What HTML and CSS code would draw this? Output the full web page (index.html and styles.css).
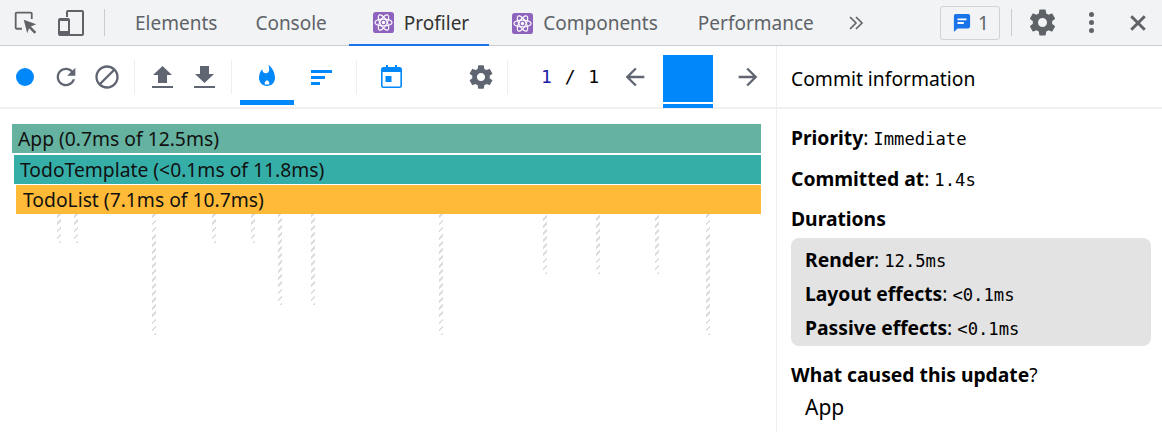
FILE: index.html
```html
<!DOCTYPE html>
<html lang="en">

    <head>
        <meta charset="UTF-8">
        <meta name="viewport" content="width=device-width, initial-scale=1.0">
        <title>Profiler</title>

        <link rel="stylesheet" href="styles.css">

    </head>

    <body>
        <div class="devtools">
            <div class="tabbar">
                <svg class="tab-icon inspect" viewBox="0 0 28 28"><path d="M10 22H4a2 2 0 0 1-2-2V4a2 2 0 0 1 2-2h16a2 2 0 0 1 2 2v6h-2V4H4v16h6z"/><path d="M12 11l14 5-6 2.5 6 6-2 2-6-6L16 26z"/></svg>
                <svg class="tab-icon device" viewBox="0 0 28 28"><path d="M9 1h16a2 2 0 0 1 2 2v22a2 2 0 0 1-2 2H12v-2h13V3H11v5H9V3a2 2 0 0 1 2-2z"/><path fill-rule="evenodd" d="M3 9h8a2 2 0 0 1 2 2v14a2 2 0 0 1-2 2H3a2 2 0 0 1-2-2V11a2 2 0 0 1 2-2zm0 3v10h8V12z"/></svg>
                <div class="tab-sep"></div>
                <div class="tab tab-elements">Elements</div>
                <div class="tab tab-console">Console</div>
                <div class="tab tab-profiler active">
                    <svg class="react-badge" viewBox="0 0 22 22"><rect width="22" height="22" rx="3" fill="#8e63bd"/><g fill="none" stroke="#fff" stroke-width="1.2"><ellipse cx="11" cy="11" rx="9" ry="3.6"/><ellipse cx="11" cy="11" rx="9" ry="3.6" transform="rotate(60 11 11)"/><ellipse cx="11" cy="11" rx="9" ry="3.6" transform="rotate(120 11 11)"/></g><circle cx="11" cy="11" r="1.8" fill="#fff"/></svg>
                    Profiler
                </div>
                <div class="tab tab-components">
                    <svg class="react-badge" viewBox="0 0 22 22"><rect width="22" height="22" rx="3" fill="#8e63bd"/><g fill="none" stroke="#fff" stroke-width="1.2"><ellipse cx="11" cy="11" rx="9" ry="3.6"/><ellipse cx="11" cy="11" rx="9" ry="3.6" transform="rotate(60 11 11)"/><ellipse cx="11" cy="11" rx="9" ry="3.6" transform="rotate(120 11 11)"/></g><circle cx="11" cy="11" r="1.8" fill="#fff"/></svg>
                    Components
                </div>
                <div class="tab tab-performance">Performance</div>
                <svg class="more" viewBox="0 0 16 14"><path d="M2 1l6 6-6 6M8 1l6 6-6 6"/></svg>
                <div class="issues">
                    <svg viewBox="0 0 20 22"><path fill="#1a73e8" d="M3 1h14a2 2 0 0 1 2 2v12a2 2 0 0 1-2 2H5l-4 4V3a2 2 0 0 1 2-2z"/><path fill="#fff" d="M5 6h10v2H5zM5 10h7v2H5z"/></svg>
                    <span>1</span>
                </div>
                <div class="tab-sep sep-right"></div>
                <svg class="top-gear" viewBox="0 0 24 24"><path d="M19.43 12.98c.04-.32.07-.64.07-.98s-.03-.66-.07-.98l2.11-1.65c.19-.15.24-.42.12-.64l-2-3.46c-.12-.22-.39-.3-.61-.22l-2.49 1c-.52-.4-1.08-.73-1.69-.98l-.38-2.65C14.46 2.18 14.25 2 14 2h-4c-.25 0-.46.18-.49.42l-.38 2.65c-.61.25-1.17.59-1.69.98l-2.49-1c-.23-.09-.49 0-.61.22l-2 3.46c-.13.22-.07.49.12.64l2.11 1.65c-.04.32-.07.65-.07.98s.03.66.07.98l-2.11 1.65c-.19.15-.24.42-.12.64l2 3.46c.12.22.39.3.61.22l2.49-1c.52.4 1.08.73 1.69.98l.38 2.65c.03.24.24.42.49.42h4c.25 0 .46-.18.49-.42l.38-2.65c.61-.25 1.17-.59 1.69-.98l2.49 1c.23.09.49 0 .61-.22l2-3.46c.12-.22.07-.49-.12-.64l-2.11-1.65zM12 15.5c-1.93 0-3.5-1.57-3.5-3.5s1.57-3.5 3.5-3.5 3.5 1.57 3.5 3.5-1.57 3.5-3.5 3.5z"/></svg>
                <div class="kebab"><i></i><i></i><i></i></div>
                <svg class="close" viewBox="0 0 16 16"><path d="M2 2l12 12M14 2L2 14"/></svg>
            </div>

            <div class="panel">
                <div class="main">
                    <div class="toolbar">
                        <div class="btn w41"><span class="record"></span></div>
                        <div class="btn w41"><svg class="icon grey" viewBox="0 0 24 24"><path d="M17.65 6.35C16.2 4.9 14.21 4 12 4c-4.42 0-7.99 3.58-7.99 8s3.57 8 7.99 8c3.73 0 6.84-2.55 7.73-6h-2.08c-.82 2.33-3.04 4-5.65 4-3.31 0-6-2.69-6-6s2.69-6 6-6c1.66 0 3.14.69 4.22 1.78L13 11h7V4l-2.35 2.35z"/></svg></div>
                        <div class="btn w41"><svg class="icon grey" viewBox="0 0 24 24"><path d="M12 2C6.48 2 2 6.48 2 12s4.48 10 10 10 10-4.48 10-10S17.52 2 12 2zM4 12c0-4.42 3.58-8 8-8 1.85 0 3.55.63 4.9 1.69L5.69 16.9C4.63 15.55 4 13.85 4 12zm8 8c-1.85 0-3.55-.63-4.9-1.69L18.31 7.1C19.37 8.45 20 10.15 20 12c0 4.42-3.58 8-8 8z"/></svg></div>
                        <div class="sep sep-a"></div>
                        <div class="btn w42 first-file"><svg class="file grey" viewBox="0 0 21 22"><path d="M10.5 0L20 9h-5v8H6V9H1zM0 20h21v2H0z"/></svg></div>
                        <div class="btn w42"><svg class="file grey" viewBox="0 0 21 22"><path d="M6 0h9v8h5l-9.500 9L1 8h5zM0 20h21v2H0z"/></svg></div>
                        <div class="sep sep-b"></div>
                        <div class="btn w54 selected"><svg class="flame blue" viewBox="0 0 24 24"><path fill-rule="evenodd" d="M13.5.67s.74 2.65.74 4.8c0 2.06-1.35 3.73-3.41 3.73-2.07 0-3.63-1.67-3.63-3.73l.03-.36C5.21 7.51 4 10.62 4 14c0 4.42 3.58 8 8 8s8-3.58 8-8C20 8.61 17.41 3.8 13.5.67zM12 16l-2.2 2v2.6h4.4V18z"/></svg></div>
                        <div class="btn w54"><svg class="ranked blue" viewBox="0 0 21 15"><path d="M0 0h21v3H0zM0 6h14v3H0zM0 12h9v3H0z"/></svg></div>
                        <div class="sep sep-c"></div>
                        <div class="btn w54 calendar"><svg class="cal-icon blue" viewBox="0 0 21 24"><path fill-rule="evenodd" d="M5 0h2v2h7V0h2v2h2.500A2.500 2.500 0 0 1 21 4.500v16a2.500 2.500 0 0 1-2.500 2.500h-16A2.500 2.500 0 0 1 0 20.500v-16A2.500 2.500 0 0 1 2.500 2H5zM1.600 7v13.400c0 .6.400 1 1 1h15.800c.6 0 1-.4 1-1V7z"/><path d="M4.500 11h6v6h-6z"/></svg></div>
                        <div class="btn w42 tool-gear"><svg class="icon grey" viewBox="0 0 24 24"><path d="M19.43 12.98c.04-.32.07-.64.07-.98s-.03-.66-.07-.98l2.11-1.65c.19-.15.24-.42.12-.64l-2-3.46c-.12-.22-.39-.3-.61-.22l-2.49 1c-.52-.4-1.08-.73-1.69-.98l-.38-2.65C14.46 2.18 14.25 2 14 2h-4c-.25 0-.46.18-.49.42l-.38 2.65c-.61.25-1.17.59-1.69.98l-2.49-1c-.23-.09-.49 0-.61.22l-2 3.46c-.13.22-.07.49.12.64l2.11 1.65c-.04.32-.07.65-.07.98s.03.66.07.98l-2.11 1.65c-.19.15-.24.42-.12.64l2 3.46c.12.22.39.3.61.22l2.49-1c.52.4 1.08.73 1.69.98l.38 2.65c.03.24.24.42.49.42h4c.25 0 .46-.18.49-.42l.38-2.65c.61-.25 1.17-.59 1.69-.98l2.49 1c.23.09.49 0 .61-.22l2-3.46c.12-.22.07-.49-.12-.64l-2.11-1.65zM12 15.500c-1.93 0-3.500-1.570-3.500-3.500s1.570-3.500 3.500-3.500 3.500 1.570 3.500 3.500-1.570 3.500-3.500 3.500z"/></svg></div>
                        <div class="sep sep-d"></div>
                        <div class="count"><span class="count-now">1</span> / 1</div>
                        <div class="btn w42"><svg class="icon grey" viewBox="0 0 24 24"><path d="M20 11H7.830l5.590-5.590L12 4l-8 8 8 8 1.410-1.410L7.830 13H20v-2z"/></svg></div>
                        <div class="commit"><div class="commit-bar"></div><div class="commit-line"></div></div>
                        <div class="btn w42 next"><svg class="icon grey" viewBox="0 0 24 24"><path d="M12 4l-1.410 1.410L16.170 11H4v2h12.170l-5.580 5.590L12 20l8-8z"/></svg></div>
                    </div>

                    <div class="chart">
                        <div class="bar bar-app">App (0.7ms of 12.5ms)</div>
                        <div class="bar bar-template">TodoTemplate (&lt;0.1ms of 11.8ms)</div>
                        <div class="bar bar-list">TodoList (7.1ms of 10.7ms)</div>
                        <div class="hatches">
                            <div class="hatch" style="left:57px;height:29px"></div>
                            <div class="hatch" style="left:74px;height:29px"></div>
                            <div class="hatch" style="left:152px;height:121px"></div>
                            <div class="hatch" style="left:212px;height:29px"></div>
                            <div class="hatch" style="left:251px;height:29px"></div>
                            <div class="hatch" style="left:278px;height:91px"></div>
                            <div class="hatch" style="left:311px;height:91px"></div>
                            <div class="hatch" style="left:439px;height:121px"></div>
                            <div class="hatch" style="left:543px;height:60px"></div>
                            <div class="hatch" style="left:596px;height:60px"></div>
                            <div class="hatch" style="left:655px;height:60px"></div>
                            <div class="hatch" style="left:706px;height:121px"></div>
                        </div>
                    </div>
                </div>

                <div class="sidebar">
                    <div class="sidebar-head">Commit information</div>
                    <div class="sidebar-body">
                        <div class="row row-priority"><b>Priority</b>: <code>Immediate</code></div>
                        <div class="row row-committed"><b>Committed at</b>: <code>1.4s</code></div>
                        <div class="row row-durations"><b>Durations</b></div>
                        <div class="durations">
                            <div class="row"><b>Render</b>: <code>12.5ms</code></div>
                            <div class="row"><b>Layout effects</b>: <code>&lt;0.1ms</code></div>
                            <div class="row"><b>Passive effects</b>: <code>&lt;0.1ms</code></div>
                        </div>
                        <div class="row row-cause"><b>What caused this update</b>?</div>
                        <div class="cause">App</div>
                    </div>
                </div>
            </div>
        </div>
    </body>

</html>
```

FILE: styles.css
```css
* {
    margin: 0;
    padding: 0;
    box-sizing: border-box;
}

html,
body {
    height: 100%;
    overflow: hidden;
}

body {
    font-family: 'Noto Sans', 'Open Sans', sans-serif;
    background-color: #fff;
    color: #000;
}

.devtools {
    display: flex;
    flex-direction: column;
    height: 432px;
}

/* top tab strip */
.tabbar {
    display: flex;
    align-items: center;
    flex: none;
    height: 46px;
    padding-left: 13px;
    background-color: #f1f3f4;
    border-bottom: 1px solid #cbcdd1;
}

.tab-icon {
    flex: none;
    width: 28px;
    height: 28px;
    fill: #5f6368;
}

.inspect {
    width: 25px;
    height: 25px;
}

.device {
    margin-left: 19px;
}

.tab-sep {
    flex: none;
    width: 1px;
    height: 27px;
    margin-left: 19px;
    background-color: #ccc;
}

.tab {
    display: flex;
    align-items: center;
    height: 45px;
    padding-top: 1px;
    font-size: 19px;
    color: #5f6368;
    white-space: nowrap;
}

.tab-elements {
    margin-left: 30px;
}

.tab-console {
    margin-left: 38px;
}

.tab-profiler {
    margin-left: 22px;
    padding: 1px 20px 0 24px;
    color: #333;
    border-bottom: 2px solid #1a73e8;
    margin-bottom: -1px;
}

.tab-components {
    margin-left: 23px;
}

.tab-performance {
    margin-left: 40px;
}

.react-badge {
    width: 21px;
    height: 21px;
    margin-right: 10px;
}

.more {
    flex: none;
    width: 16px;
    height: 14px;
    margin-left: 34px;
    fill: none;
    stroke: #5f6368;
    stroke-width: 1.6;
}

.issues {
    display: flex;
    align-items: center;
    gap: 7px;
    height: 34px;
    width: 60px;
    margin-left: auto;
    padding-left: 12px;
    border: 1px solid #d0d3d6;
    border-radius: 3px;
    font-size: 19px;
    color: #5f6368;
}

.issues svg {
    width: 18px;
    height: 20px;
}

.tab-sep.sep-right {
    margin-left: 11px;
}

.top-gear {
    flex: none;
    width: 31px;
    height: 31px;
    margin-left: 15px;
    fill: #5f6368;
}

.kebab {
    display: flex;
    flex-direction: column;
    gap: 3px;
    margin-left: 31px;
}

.kebab i {
    display: block;
    width: 5px;
    height: 5px;
    border-radius: 50%;
    background-color: #5f6368;
}

.close {
    flex: none;
    width: 18px;
    height: 18px;
    margin: 0 15px 0 35px;
    fill: none;
    stroke: #5f6368;
    stroke-width: 2.6;
}

/* profiler panel */
.panel {
    display: flex;
    flex: 1;
    min-height: 0;
}

.main {
    width: 776px;
    flex: none;
}

.toolbar {
    display: flex;
    align-items: center;
    height: 63px;
    padding-left: 4px;
    border-bottom: 2px solid #f0f0f0;
}

.btn {
    display: flex;
    align-items: center;
    justify-content: center;
    flex: none;
    height: 61px;
}

.w41 {
    width: 41px;
}

.w42 {
    width: 42px;
}

.w54 {
    width: 54px;
}

.record {
    width: 18px;
    height: 18px;
    border-radius: 50%;
    background-color: #0088fa;
}

.icon {
    width: 28px;
    height: 28px;
}

.file {
    width: 21px;
    height: 22px;
}

.flame {
    width: 24px;
    height: 24px;
}

.ranked {
    width: 21px;
    height: 15px;
    margin-top: 2px;
}

.cal-icon {
    width: 21px;
    height: 24px;
}

.grey {
    fill: #5f6672;
}

.blue {
    fill: #0088fa;
}

.sep {
    flex: none;
    width: 1px;
    height: 34px;
    background-color: #eee;
}

.sep-a {
    margin-left: 7px;
}

.first-file {
    margin-left: 6px;
}

.sep-b {
    margin-left: 6px;
}

.selected {
    margin-left: 8px;
    box-shadow: inset 0 -5px 0 #0088fa;
    height: 58px;
    margin-top: -1px;
}

.sep-c {
    margin-left: 8px;
}

.calendar {
    margin-left: 7px;
}

.tool-gear {
    margin-left: 42px;
}

.sep-d {
    margin-left: 5px;
}

.count {
    flex: none;
    width: 106px;
    padding-left: 33px;
    font-family: 'DejaVu Sans Mono', monospace;
    font-size: 18px;
    word-spacing: 2px;
    white-space: pre;
}

.count-now {
    color: #1a1aa6;
}

.commit {
    flex: none;
    width: 50px;
    margin-left: 7px;
    align-self: flex-start;
    padding-top: 9px;
}

.commit-bar {
    height: 47px;
    background-color: #0088fa;
}

.commit-line {
    height: 4px;
    margin-top: 2px;
    background-color: #0088fa;
}

.next {
    margin-left: 14px;
}

/* flame chart */
.chart {
    padding-top: 15px;
}

.bar {
    display: flex;
    align-items: center;
    width: 749px;
    height: 29px;
    margin-left: 12px;
    margin-bottom: 1px;
    padding-left: 6px;
    font-size: 19.3px;
    color: #111;
    white-space: nowrap;
}

.bar-app {
    background-color: #65b2a0;
    margin-bottom: 2px;
}

.bar-template {
    width: 747px;
    margin-left: 14px;
    background-color: #35aea8;
}

.bar-list {
    width: 745px;
    margin-left: 16px;
    margin-bottom: 0;
    padding-left: 7px;
    background-color: #ffbb38;
}

.hatches {
    position: relative;
}

.hatch {
    position: absolute;
    top: 0;
    width: 4px;
    background: repeating-linear-gradient(-45deg, #dcdcdc 0 2px, #fff 2px 5px);
}

/* commit details */
.sidebar {
    flex: 1;
    border-left: 1px solid #eee;
}

.sidebar-head {
    display: flex;
    align-items: center;
    height: 63px;
    padding: 3px 0 0 14px;
    font-size: 19.3px;
    border-bottom: 2px solid #f0f0f0;
}

.sidebar-body {
    padding: 15px 11px 0 14px;
    font-size: 19.3px;
}

.row {
    display: flex;
    align-items: baseline;
    height: 30px;
    white-space: pre;
}

.row-priority {
    margin-bottom: 11px;
}

.row-committed {
    margin-bottom: 10px;
}

.row-durations {
    margin-bottom: 3px;
}

code {
    font-family: 'DejaVu Sans Mono', monospace;
    font-size: 17.2px;
}

.durations {
    height: 108px;
    padding: 8px 14px 0;
    border-radius: 8px;
    background-color: #e3e3e3;
}

.durations .row {
    height: 34px;
}

.row-cause {
    margin-top: 15px;
}

.cause {
    margin-top: 2px;
    padding-left: 14px;
    font-size: 21px;
}
```
